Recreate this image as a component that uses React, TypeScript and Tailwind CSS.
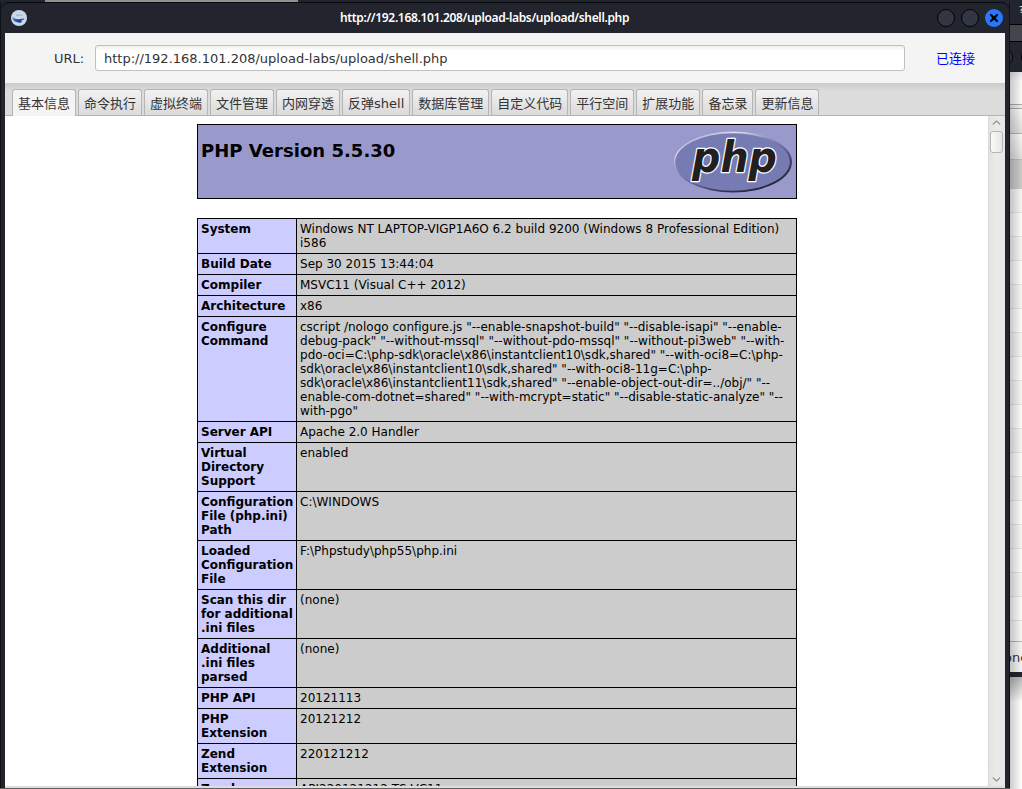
import { ChevronDown, ChevronUp, X } from 'lucide-react'

const tabs = ['命令执行', '虚拟终端', '文件管理', '内网穿透', '反弹shell', '数据库管理', '自定义代码', '平行空间', '扩展功能', '备忘录', '更新信息']

const rows: { name: string[]; value: string[] }[] = [
    { name: ['System'], value: ['Windows NT LAPTOP-VIGP1A6O 6.2 build 9200 (Windows 8 Professional Edition)', 'i586'] },
    { name: ['Build Date'], value: ['Sep 30 2015 13:44:04'] },
    { name: ['Compiler'], value: ['MSVC11 (Visual C++ 2012)'] },
    { name: ['Architecture'], value: ['x86'] },
    {
        name: ['Configure', 'Command'],
        value: [
            'cscript /nologo configure.js "--enable-snapshot-build" "--disable-isapi" "--enable-',
            'debug-pack" "--without-mssql" "--without-pdo-mssql" "--without-pi3web" "--with-',
            'pdo-oci=C:\\php-sdk\\oracle\\x86\\instantclient10\\sdk,shared" "--with-oci8=C:\\php-',
            'sdk\\oracle\\x86\\instantclient10\\sdk,shared" "--with-oci8-11g=C:\\php-',
            'sdk\\oracle\\x86\\instantclient11\\sdk,shared" "--enable-object-out-dir=../obj/" "--',
            'enable-com-dotnet=shared" "--with-mcrypt=static" "--disable-static-analyze" "--',
            'with-pgo"',
        ],
    },
    { name: ['Server API'], value: ['Apache 2.0 Handler'] },
    { name: ['Virtual', 'Directory', 'Support'], value: ['enabled'] },
    { name: ['Configuration', 'File (php.ini)', 'Path'], value: ['C:\\WINDOWS'] },
    { name: ['Loaded', 'Configuration', 'File'], value: ['F:\\Phpstudy\\php55\\php.ini'] },
    { name: ['Scan this dir', 'for additional', '.ini files'], value: ['(none)'] },
    { name: ['Additional', '.ini files', 'parsed'], value: ['(none)'] },
    { name: ['PHP API'], value: ['20121113'] },
    { name: ['PHP', 'Extension'], value: ['20121212'] },
    { name: ['Zend', 'Extension'], value: ['220121212'] },
    { name: ['Zend', 'Extension Build'], value: ['API220121212,TS,VC11'] },
]

function AppIcon() {
    return (
        <svg width="16" height="16" viewBox="0 0 16 16">
            <circle cx="8" cy="8" r="8" fill="#c5d9ea" />
            <path d="M5 5.2h6.5" stroke="#9ba9b6" strokeWidth=".9" />
            <path d="M1.5 7 Q3 9 5.5 9 L13.5 8.5 Q13 10.5 10 10.5 L10.5 12.5 L5 12 Q2 11 1.5 7Z" fill="#3a5da8" />
            <path d="M5.5 10.2l5.5.3-1 2H7z" fill="#253e86" />
            <path d="M6 8.2h3" stroke="#e5eef5" strokeWidth="1" />
        </svg>
    )
}

function PhpLogo() {
    return (
        <svg width="120" height="67" viewBox="0 0 120 67" className="shrink-0">
            <defs>
                <linearGradient id="rim" x1="0.15" y1="0" x2="0.85" y2="1">
                    <stop offset="0" stopColor="#9999cc" />
                    <stop offset="0.18" stopColor="#dcdcf0" />
                    <stop offset="0.4" stopColor="#8589bd" />
                    <stop offset="0.7" stopColor="#44466a" />
                    <stop offset="1" stopColor="#17171f" />
                </linearGradient>
            </defs>
            <ellipse cx="60" cy="34" rx="59" ry="30.5" fill="url(#rim)" />
            <ellipse cx="59.5" cy="34" rx="57.3" ry="28.8" fill="#777bb3" />
            <text
                x="19"
                y="43.5"
                textLength="85"
                lengthAdjust="spacingAndGlyphs"
                fontFamily="DejaVu Sans, sans-serif"
                fontSize="43"
                fontWeight="bold"
                fontStyle="italic"
                fill="#231f20"
                stroke="#ffffff"
                strokeWidth="2.6"
                strokeLinejoin="round"
                paintOrder="stroke"
            >
                php
            </text>
        </svg>
    )
}

function TitleBar() {
    return (
        <header className="flex h-[31px] shrink-0 items-center rounded-t-lg border-t border-[#08090c] bg-[#23252e] pr-1.5 pl-2.5">
            <AppIcon />
            <h1 className="flex-1 pl-[5px] text-center font-['Noto_Sans','Open_Sans',sans-serif] text-[12px] font-semibold tracking-[-0.34px] text-white">
                <span className="inline-block whitespace-nowrap">http://192.168.101.208/upload-labs/upload/shell.php</span>
            </h1>
            <div className="flex gap-1.5">
                <button className="size-[18px] rounded-full border border-black bg-[#323642]" />
                <button className="size-[18px] rounded-full border border-black bg-[#323642]" />
                <button className="grid size-[18px] place-items-center rounded-full bg-[#2777ff] text-black">
                    <X size={12} strokeWidth={4.5} />
                </button>
            </div>
        </header>
    )
}

function UrlBar() {
    return (
        <div className="flex h-[50px] shrink-0 items-center bg-[#f4f4f4] text-[13px] text-[#333]">
            <label className="w-[90px] pt-px pl-[49px]">URL:</label>
            <div className="flex h-[26px] w-[810px] items-center rounded-[3px] border border-[#c0c0c0] bg-white bg-linear-to-b from-[#f0f0f0] to-white to-20% pt-px pl-2 whitespace-nowrap">
                http://192.168.101.208/upload-labs/upload/shell.php
            </div>
            <span className="pt-px pl-[31px] text-[#0000ff]">已连接</span>
        </div>
    )
}

function TabBar() {
    return (
        <nav className="flex h-[33px] shrink-0 items-end gap-[2px] border-b border-[#b5b5b5] bg-linear-to-b from-[#cbcbcb] to-[#dcdcdc] to-25% pl-[6.5px] text-[13px] whitespace-nowrap text-[#333]">
            <button className="-mb-px h-[27px] rounded-t-[3px] border border-b-0 border-[#b5b5b5] bg-[#f4f4f4] pt-px pr-[4.5px] pl-[5.5px]">基本信息</button>
            {tabs.map((tab) => (
                <button key={tab} className="h-[26px] rounded-t-[3px] border border-b-0 border-[#b5b5b5] bg-linear-to-b from-[#f2f2f2] to-[#dadada] pt-0.5 pr-[4.5px] pl-[5.5px]">
                    {tab}
                </button>
            ))}
        </nav>
    )
}

function PhpInfo() {
    return (
        <main className="min-w-0 flex-1 overflow-hidden bg-white pt-2 pl-48 text-[12px] leading-[14px] text-black">
            <section className="flex h-[75px] w-[600px] justify-between border border-black bg-[#9999cc] pt-[3px] pr-[3px] pl-[3px]">
                <h1 className="pt-3 text-[18px] leading-[22px] font-bold tracking-[0.03px]">PHP Version 5.5.30</h1>
                <PhpLogo />
            </section>
            <table className="mt-[19px] w-[600px] table-fixed border-separate border-spacing-0 border-t border-l border-black">
                <colgroup>
                    <col className="w-[99px]" />
                    <col />
                </colgroup>
                <tbody>
                    {rows.map((row) => (
                        <tr key={row.name.join(' ')} className="align-top whitespace-nowrap">
                            <th className="border-r border-b border-black bg-[#ccccff] p-[3px] text-left font-bold">
                                {row.name.map((line) => <div key={line}>{line}</div>)}
                            </th>
                            <td className="border-r border-b border-black bg-[#cccccc] p-[3px] tracking-[0.01px]">
                                {row.value.map((line) => <div key={line}>{line}</div>)}
                            </td>
                        </tr>
                    ))}
                </tbody>
            </table>
        </main>
    )
}

function Scrollbar() {
    return (
        <aside className="flex w-[17px] shrink-0 flex-col items-center border-l border-[#d8d8d8] bg-linear-to-r from-[#e3e3e3] via-[#ebebeb] to-[#e6e6e6] pr-px text-[#929292]">
            <ChevronUp size={13} strokeWidth={2.5} />
            <div className="mt-0.5 h-[22px] w-[13px] rounded-[3px] border border-[#b4b4b4] bg-linear-to-r from-[#fafafa] to-[#e6e6e6]" />
            <ChevronDown size={13} strokeWidth={2.5} className="mt-auto" />
        </aside>
    )
}

// the window behind, only its right edge can be seen
function BackWindow() {
    return (
        <div className="relative flex w-3 shrink-0 flex-col overflow-hidden bg-white">
            <div className="h-[24px] shrink-0 bg-[#23252e] pt-1 pl-[9px] text-[9px] leading-3 text-white">?</div>
            <div className="h-[18px] shrink-0 border-y border-black bg-[#45464b]" />
            <div className="flex h-[30px] shrink-0 items-center gap-2 bg-[#23252e]">
                <span className="-ml-[15px] size-[18px] shrink-0 rounded-full border border-black bg-[#30333d]" />
                <span className="size-[18px] shrink-0 rounded-full border border-black bg-[#30333d]" />
            </div>
            <div className="h-[33px] shrink-0 border-b border-[#aaa] bg-linear-to-b from-[#e4e4e4] to-[#fafafa] to-30%" />
            <div className="h-[4px] shrink-0 border-b border-[#aaa] bg-[#eee]" />
            <div className="h-[25px] shrink-0 border-b border-[#b0b0b0] bg-linear-to-b from-[#f7f7f7] to-[#dedede]" />
            <div className="h-[26px] shrink-0 border-b border-[#bbb] bg-linear-to-b from-[#f7f7f7] to-[#dedede]" />
            <div className="h-[29px] shrink-0 bg-[#cacaca]" />
            {Array.from({ length: 18 }, (_, i) => (
                <div key={i} className="h-[24px] shrink-0 border-b border-[#e2e2e2] odd:bg-[#f5f5f5] even:bg-[#fbfbfb]" />
            ))}
            <div className="h-[21px] shrink-0 border-b border-[#b5b5b5] bg-[#f7f7f7]" />
            <div className="h-[30px] shrink-0 bg-[#f4f4f4] pt-1.5 text-[13px] text-[#333]">
                <span className="-ml-[6px]">one</span>
            </div>
            <div className="h-[5px] shrink-0 bg-[#23252e]" />
            <div className="h-[25px] shrink-0 bg-linear-to-b from-[#b5b5b5] to-white" />
            <div className="absolute inset-x-0 top-[72px] bottom-0 bg-linear-to-r from-black/20 to-transparent" />
        </div>
    )
}

export default function App() {
    return (
        <div className="flex h-[789px] w-[1022px] overflow-hidden bg-[#23252e] font-['DejaVu_Sans','Noto_Sans_CJK_SC',sans-serif]">
            <div className="flex w-[1010px] shrink-0 flex-col">
                <div className="flex h-0.5 shrink-0">
                    <div className="ml-[45px] w-[253px] bg-[#909090]" />
                </div>
                <div className="flex min-h-0 flex-1 flex-col border-x border-[#101116]">
                    <TitleBar />
                    <div className="mx-1 flex min-h-0 flex-1 flex-col">
                        <UrlBar />
                        <TabBar />
                        <div className="flex min-h-0 flex-1">
                            <PhpInfo />
                            <Scrollbar />
                        </div>
                        <div className="h-0.5 shrink-0 bg-[#dedede]" />
                    </div>
                </div>
                <div className="h-px shrink-0 bg-[#5f5f5f]" />
            </div>
            <BackWindow />
        </div>
    )
}
